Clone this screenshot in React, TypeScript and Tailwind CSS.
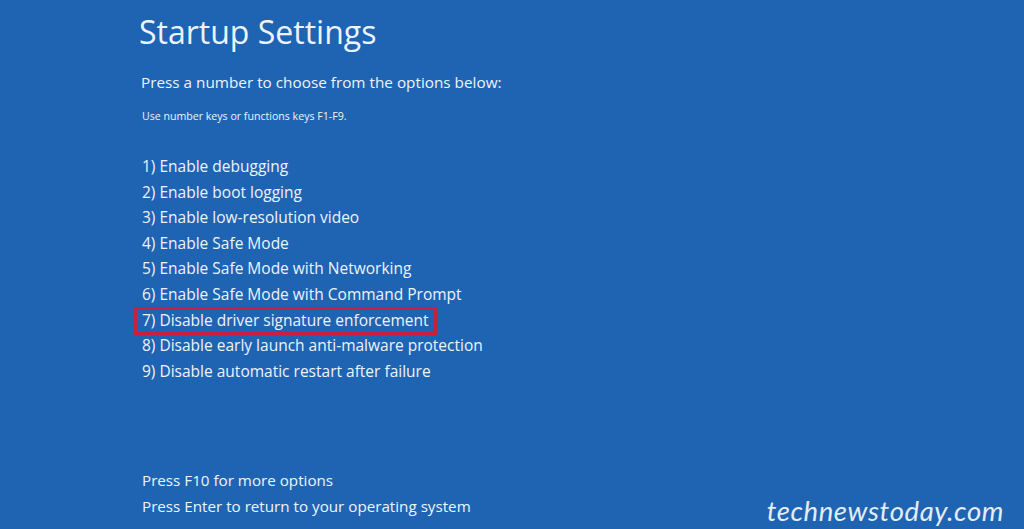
const options = [
  "1) Enable debugging",
  "2) Enable boot logging",
  "3) Enable low-resolution video",
  "4) Enable Safe Mode",
  "5) Enable Safe Mode with Networking",
  "6) Enable Safe Mode with Command Prompt",
  "7) Disable driver signature enforcement",
  "8) Disable early launch anti-malware protection",
  "9) Disable automatic restart after failure",
];

export default function App() {
  return (
    <div className="relative flex h-[529px] w-[1024px] flex-col overflow-hidden bg-[#1f64b3] pl-[139px] font-['Open_Sans','Noto_Sans',sans-serif] text-[#eef3fa]">
      <h1 className="mt-[10px] text-[32px] leading-[44px] font-normal">Startup Settings</h1>

      <p className="mt-[17px] pl-[2px] text-[15.3px] leading-[22px]">
        Press a number to choose from the options below:
      </p>
      <p className="mt-[16px] pl-[3px] text-[10.6px] leading-[14px]">
        Use number keys or functions keys F1-F9.
      </p>

      <ul className="mt-[31px] flex flex-col">
        {options.map((item, i) => (
          <li key={item} className="relative pl-[3px] text-[15.5px] leading-[25.6px]">
            {i === 6 && (
              <div className="absolute top-[-1px] left-[-5px] h-[28px] w-[303px] border-[3px] border-[#c8213e]" />
            )}
            {item}
          </li>
        ))}
      </ul>

      <div className="mt-auto mb-[9px] flex flex-col pl-[3px] text-[15.2px] leading-[25.8px]">
        <span>Press F10 for more options</span>
        <span>Press Enter to return to your operating system</span>
      </div>

      <div className="absolute right-[20px] bottom-[-2px] font-['Lato','Open_Sans',sans-serif] text-[27.5px] italic tracking-[0.6px] text-[#e4ecf6]">
        technewstoday.com
      </div>
    </div>
  );
}
